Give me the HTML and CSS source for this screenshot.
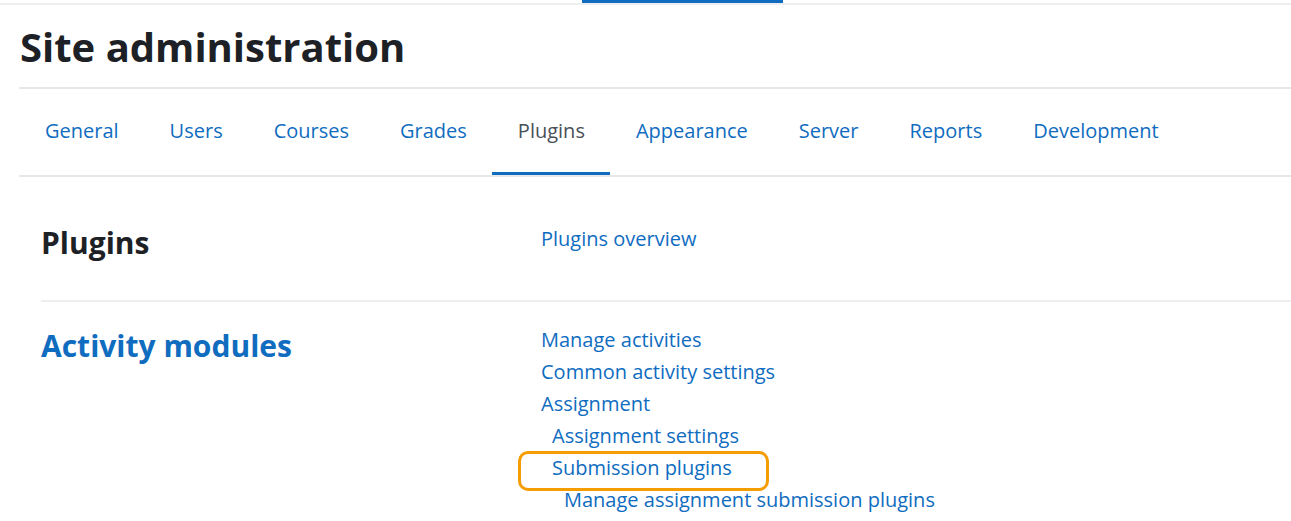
FILE: index.html
```html
<!DOCTYPE html>
<html lang="en">
<head>
<meta charset="utf-8">
<title>Site administration</title>
<link rel="stylesheet" href="styles.css">
</head>
<body>
<div class="topbar"><div class="topbar-active"></div></div>
<div class="page">
  <h1 class="page-title">Site administration</h1>
  <nav class="tabs">
    <a class="tab" href="#">General</a>
    <a class="tab" href="#">Users</a>
    <a class="tab" href="#">Courses</a>
    <a class="tab" href="#">Grades</a>
    <a class="tab active" href="#">Plugins</a>
    <a class="tab" href="#">Appearance</a>
    <a class="tab" href="#">Server</a>
    <a class="tab" href="#">Reports</a>
    <a class="tab" href="#">Development</a>
  </nav>
  <div class="content">
    <section class="row row-first">
      <h2 class="row-title">Plugins</h2>
      <ul class="links">
        <li><a href="#">Plugins overview</a></li>
      </ul>
    </section>
    <section class="row row-second">
      <h2 class="row-title link-title"><a href="#">Activity modules</a></h2>
      <ul class="links">
        <li><a href="#">Manage activities</a></li>
        <li><a href="#">Common activity settings</a></li>
        <li><a href="#">Assignment</a></li>
        <li class="l1"><a href="#">Assignment settings</a></li>
        <li class="l1 highlight"><a href="#">Submission plugins</a></li>
        <li class="l2"><a href="#">Manage assignment submission plugins</a></li>
      </ul>
    </section>
  </div>
</div>
</body>
</html>
```
FILE: styles.css
```css
html, body {
  margin: 0;
  padding: 0;
  background: #fff;
}
body {
  font-family: "Open Sans", "Noto Sans", sans-serif;
  color: #1d2125;
}
a {
  color: #0f6cbf;
  text-decoration: none;
}
.topbar {
  height: 3px;
  border-bottom: 2px solid #eceeef;
}
.topbar-active {
  margin-left: 582px;
  width: 201px;
  height: 3px;
  background: #0f6cbf;
}
.page {
  padding-left: 19px;
}
.page-title {
  margin: 0;
  padding-left: 1px;
  height: 82px;
  font-size: 40px;
  line-height: 84px;
  font-weight: 700;
  color: #1d2125;
  border-bottom: 2px solid #e6e8ea;
}
.tabs {
  display: flex;
  height: 86px;
  border-bottom: 2px solid #e6e8ea;
}
.tab {
  display: flex;
  align-items: center;
  padding: 0 25px 0 26px;
  font-size: 20px;
  color: #0f6cbf;
  border-bottom: 3px solid transparent;
}
.tab.active {
  color: #495057;
  border-bottom-color: #0f6cbf;
}
.content {
  padding-left: 22px;
}
.row {
  display: grid;
  grid-template-columns: 500px 1fr;
}
.row-first {
  padding: 46px 0 37px;
  border-bottom: 2px solid #eceeef;
}
.row-second {
  padding: 22px 0 0;
}
.row-title {
  margin: 0;
  font-size: 30px;
  line-height: 40px;
  font-weight: 700;
  color: #1d2125;
}
.link-title {
  font-size: 30px;
  line-height: 44px;
}
.link-title a {
  color: #0f6cbf;
}
.links {
  list-style: none;
  margin: 0;
  padding: 0;
  font-size: 20px;
  line-height: 32px;
}
.l1 {
  padding-left: 11px;
}
.l2 {
  padding-left: 23px;
}
.highlight {
  position: relative;
}
.highlight::before {
  content: "";
  position: absolute;
  left: -23px;
  top: -1px;
  width: 245px;
  height: 34px;
  border: 3px solid #f59c00;
  border-radius: 10px;
}
```
